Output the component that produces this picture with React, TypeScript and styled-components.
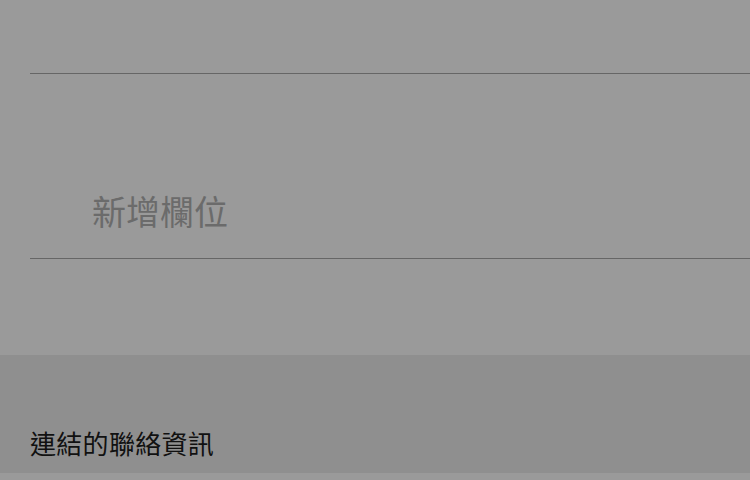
import React from 'react';
import styled, { createGlobalStyle } from 'styled-components';

const GlobalStyle = createGlobalStyle`
  html, body {
    margin: 0;
    padding: 0;
    background: #9a9a9a;
  }
  body {
    font-family: "Noto Sans CJK TC", "Noto Sans", sans-serif;
  }
`;

const Screen = styled.div`
  width: 750px;
  height: 480px;
  overflow: hidden;
  display: flex;
  flex-direction: column;
  background: #9a9a9a;
`;

const FieldRow = styled.div<{ $height: number }>`
  height: ${p => p.$height}px;
  margin-left: 30px;
  border-bottom: 1px solid #666666;
  display: flex;
  align-items: flex-end;
  padding-bottom: 30px;
  box-sizing: border-box;
`;

const Placeholder = styled.span`
  padding-left: 62px;
  font-size: 34px;
  line-height: 1;
  color: #6b6b6b;
`;

const Spacer = styled.div`
  height: 96px;
`;

const SectionHeader = styled.div`
  height: 118px;
  background: #8f8f8f;
  display: flex;
  align-items: flex-end;
  padding: 0 0 17px 30px;
  box-sizing: border-box;
`;

const SectionTitle = styled.span`
  font-size: 26px;
  line-height: 1;
  letter-spacing: 0.3px;
  color: #111111;
`;

export default function App() {
  return (
    <>
      <GlobalStyle />
      <Screen>
        <FieldRow $height={74} />
        <FieldRow $height={185}>
          <Placeholder>新增欄位</Placeholder>
        </FieldRow>
        <Spacer />
        <SectionHeader>
          <SectionTitle>連結的聯絡資訊</SectionTitle>
        </SectionHeader>
      </Screen>
    </>
  );
}
